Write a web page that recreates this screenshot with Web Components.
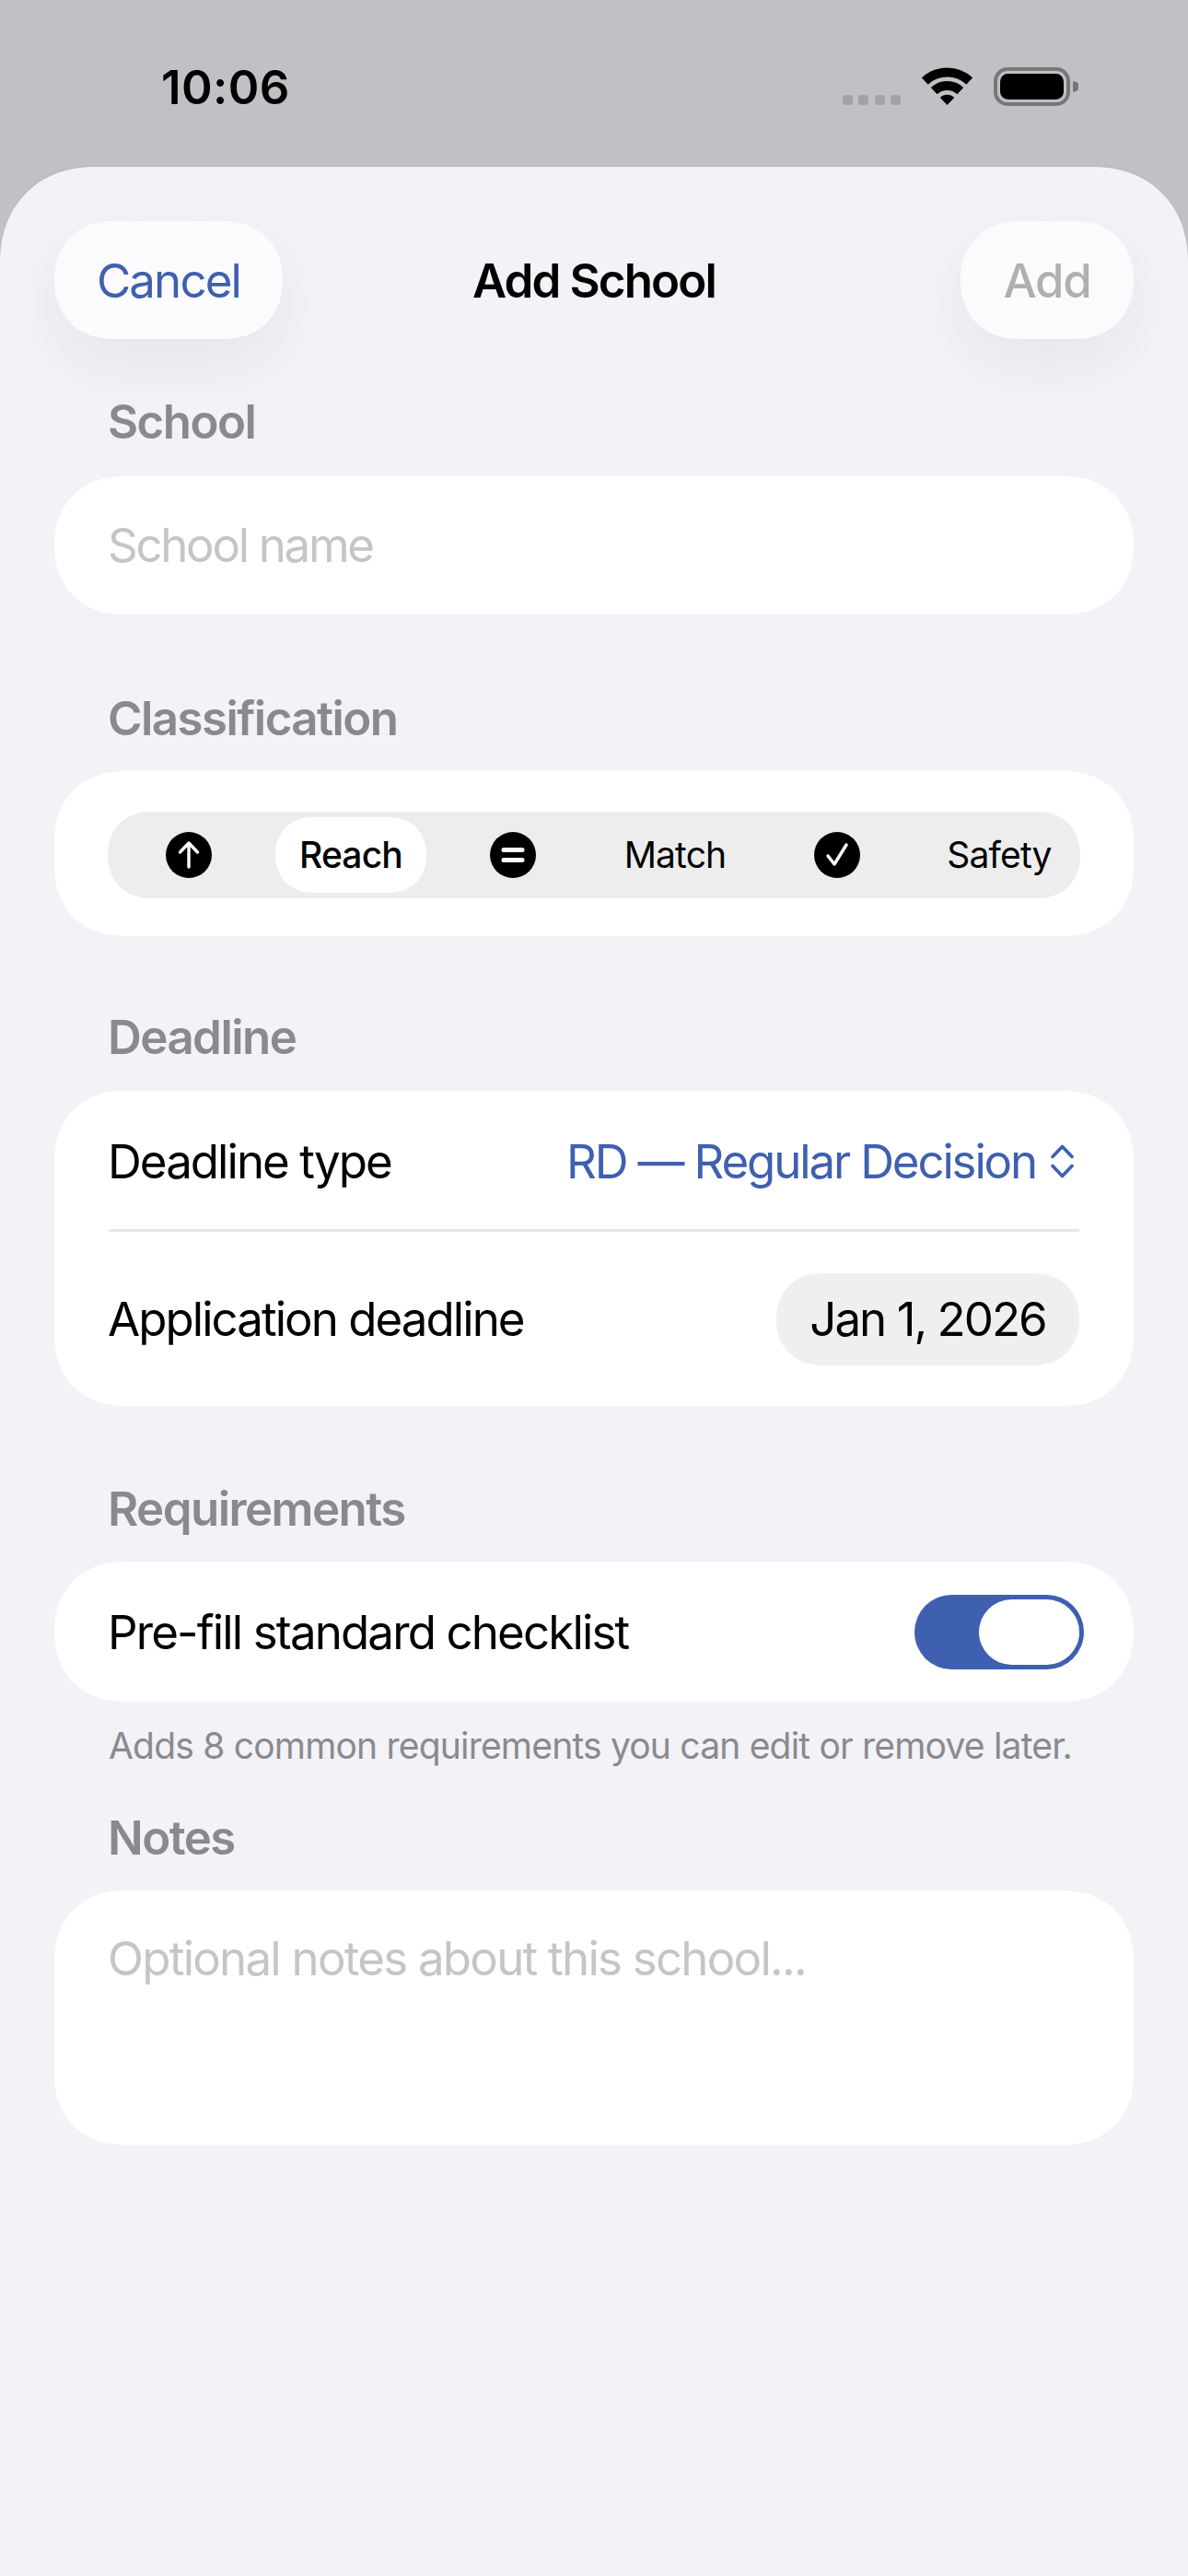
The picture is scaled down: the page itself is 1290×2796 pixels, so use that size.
<!DOCTYPE html>
<html lang="en"><head><meta charset="utf-8"><title>Add School</title>
<style>
html,body{margin:0;padding:0;background:#c1c0c5}
body{font-family:Inter,"Noto Sans",sans-serif;color:#000;-webkit-font-smoothing:antialiased}
</style></head><body>
<phone-screen>
  <status-bar slot="status" time="10:06"></status-bar>
  <sheet-header title="Add School" cancel="Cancel" confirm="Add"></sheet-header>

  <form-section label="School" style="--label-gap:29px;margin-top:60px">
    <form-card><text-field style="--ls:-2.3px" placeholder="School name"></text-field></form-card>
  </form-section>

  <form-section label="Classification" style="--label-gap:27px;margin-top:83px">
    <form-card style="--pad:44px 58px 41px"><segment-control></segment-control></form-card>
  </form-section>

  <form-section label="Deadline" style="--label-gap:28px;margin-top:80px">
    <form-card>
      <form-row style="--h:150px;--nudge:3px" label="Deadline type"><picker-value>RD — Regular Decision</picker-value></form-row>
      <form-divider></form-divider>
      <form-row style="--h:189px" label="Application deadline"><date-chip>Jan 1, 2026</date-chip></form-row>
    </form-card>
  </form-section>

  <form-section label="Requirements" style="--label-gap:27px;margin-top:82px" footer="Adds 8 common requirements you can edit or remove later.">
    <form-card><form-row style="--h:152px;--ls:-1.85px;--nudge:2px" label="Pre-fill standard checklist"><toggle-switch></toggle-switch></form-row></form-card>
  </form-section>

  <form-section label="Notes" style="--label-gap:27px;margin-top:46px">
    <form-card><text-field style="--ls:-1.75px" multiline placeholder="Optional notes about this school..."></text-field></form-card>
  </form-section>
</phone-screen>

<script>
function define(name, css, html, extra){
  customElements.define(name, class extends HTMLElement{
    connectedCallback(){
      if(this.shadowRoot) return;
      const root=this.attachShadow({mode:'open'});
      const h = typeof html==='function' ? html(this) : html;
      root.innerHTML='<style>'+css+'</style>'+h;
      if(extra) extra(this,root);
    }
  });
}
const BODY='font:400 51px/60px Inter,"Noto Sans",sans-serif;letter-spacing:var(--ls,-1.95px);';
const SQ='corner-shape:superellipse(1.12);';

define('phone-screen',
 ':host{display:flex;flex-direction:column;width:1290px;height:2796px;background:#c1c0c5;overflow:hidden}'+
 '.sheet{flex:1;background:#f2f2f7;border-radius:104px 104px 0 0;'+SQ+'box-shadow:0 -1px 1px rgba(0,0,0,.06);display:flex;flex-direction:column;padding:59px 59px 0}',
 '<slot name="status"></slot><div class="sheet"><slot></slot></div>');

define('status-bar',
 ':host{display:flex;height:181px;box-sizing:border-box;flex:none;justify-content:space-between;padding:0 119px 0 175px}'+
 '.time{font:600 51px/60px Inter,sans-serif;letter-spacing:.4px;margin-top:65px;color:#000}'+
 '.icons{display:flex;align-items:flex-start;margin-top:73px}'+
 '.dots{display:flex;gap:6.5px;margin:30px 23px 0 0}.dots i{display:block;width:11px;height:11px;border-radius:3.5px;background:#a3a3a7}'+
 '.wifi{display:block;margin-right:23px}.bat{display:block}',
 el=>`<div class="time">${el.getAttribute('time')}</div><div class="icons">
 <div class="dots"><i></i><i></i><i></i><i></i></div>
 <svg class="wifi" width="55" height="41" viewBox="0 0 55 41"><g fill="none" stroke="#000" stroke-width="10"><path d="M3.3 15.04A35.5 35.5 0 0 1 51.7 15.04"/><path d="M13.2 25.65A21 21 0 0 1 41.8 25.65"/></g><path d="M27.5 41L19.8 33A11 11 0 0 1 35.2 33Z" fill="#000"/></svg>
 <svg class="bat" width="92" height="42" viewBox="0 0 92 42"><rect x="2" y="2" width="79" height="38" rx="13" fill="none" stroke="#77777b" stroke-width="4"/><rect x="7" y="7" width="69" height="28" rx="8.5" fill="#000"/><path d="M86 15a7 6 0 0 1 0 12Z" fill="#77777b"/></svg>
 </div>`);

define('nav-pill',
 ':host{display:flex;align-items:center;justify-content:center;box-sizing:border-box;padding-top:2px;height:128px;width:var(--w);border-radius:64px;'+SQ+'background:#fbfbfe;box-shadow:0 26px 70px rgba(0,0,0,.055);font:var(--wt,400) 51px/60px Inter,sans-serif;letter-spacing:var(--ls,-1.85px);color:var(--c,#3f60b0)}',
 '<slot></slot>');

define('sheet-header',
 ':host{display:grid;grid-template-columns:1fr auto 1fr;align-items:center;flex:none}'+
 '.t{font:600 51px/60px Inter,sans-serif;letter-spacing:-1.85px;color:#000;padding-top:2px}'+
 '.l{justify-self:start}.r{justify-self:end}',
 el=>`<nav-pill class="l" style="--w:248px">${el.getAttribute('cancel')}</nav-pill><div class="t">${el.getAttribute('title')}</div><nav-pill class="r" style="--c:#b0b0b3;--w:188px;--wt:500;--ls:-1.3px">${el.getAttribute('confirm')}</nav-pill>`);

define('form-section',
 ':host{display:block;flex:none}'+
 '.lab{font:600 51px/60px Inter,sans-serif;letter-spacing:-1.55px;color:#8a8a8e;padding-left:58px;margin-bottom:var(--label-gap,27px)}'+
 '.foot{font:400 39px/48px Inter,sans-serif;letter-spacing:-.8px;color:#8a8a8e;padding-left:59px;margin-top:24px}',
 el=>`<div class="lab">${el.getAttribute('label')}</div><slot></slot>${el.hasAttribute('footer')?`<div class="foot">${el.getAttribute('footer')}</div>`:''}`);

define('form-card',
 ':host{display:block;background:#fff;border-radius:76px;'+SQ+'padding:var(--pad,0 59px 0 59px);box-sizing:border-box}',
 '<slot></slot>');

define('text-field',
 ':host{display:flex;align-items:center;height:150px;'+BODY+'color:#c5c5c7}'+
 'span{margin-left:-1px}'+
 ':host([multiline]){height:276px;align-items:flex-start;padding-top:44px;box-sizing:border-box}',
 el=>`<span>${el.getAttribute('placeholder')}</span>`);

define('form-row',
 ':host{display:flex;align-items:center;justify-content:space-between;height:var(--h,150px);'+BODY+'color:#000}'+
 'span{margin-left:-1px;padding-top:var(--nudge,0)}',
 el=>`<span>${el.getAttribute('label')}</span><slot></slot>`);

define('form-divider',':host{display:block;height:3px;background:#e7e7e9}','');

define('picker-value',
 ':host{display:flex;align-items:center;gap:16px;color:#3f60b0;padding:var(--nudge,0) 6px 0 0;letter-spacing:-2.15px}'+
 'svg{display:block}',
 '<span><slot></slot></span><svg width="25" height="37" viewBox="0 0 25 37" fill="none" stroke="#3f60b0" stroke-width="3.6" stroke-linecap="round" stroke-linejoin="round"><path d="M2 13.5L12.5 2.5L23 13.5"/><path d="M2 23.5L12.5 34.5L23 23.5"/></svg>');

define('date-chip',
 ':host{display:flex;align-items:center;justify-content:center;height:100px;width:329px;border-radius:50px;'+SQ+'background:#efeff0;color:#000}',
 '<slot></slot>');

define('toggle-switch',
 ':host{display:flex;justify-content:flex-end;align-items:center;box-sizing:border-box;width:184px;height:81px;border-radius:41px;background:#3f60b0;padding:0 5px;margin-right:-5px}'+
 'i{display:block;width:109px;height:71px;border-radius:36px;background:#fff}',
 '<i></i>');

define('segment-icon',
 ':host{display:flex;align-items:center;justify-content:center}svg{display:block}',
 el=>{
  const k=el.getAttribute('kind');
  const g={up:'<path d="M25 38V13M15.5 22L25 12L34.5 22"/>',
           eq:'<path d="M15 19.5H35" stroke-width="5"/><path d="M15 30.5H35" stroke-width="5"/>',
           ok:'<path d="M15 26L22 35L35 14"/>'}[k];
  return `<svg width="50" height="50" viewBox="0 0 50 50"><circle cx="25" cy="25" r="25" fill="#000"/><g fill="none" stroke="#fff" stroke-width="3.4" stroke-linecap="round" stroke-linejoin="round">${g}</g></svg>`;
 });

define('segment-label',
 ':host{display:flex;align-items:center;justify-content:center;margin:6px;border-radius:41px;'+SQ+'font:400 39px/48px Inter,sans-serif;letter-spacing:-.85px;color:#000}'+
 ':host([selected]){background:#fff;font-weight:500}',
 '<slot></slot>');

define('segment-control',
 ':host{display:grid;grid-template-columns:repeat(6,1fr);height:94px;border-radius:47px;'+SQ+'background:#ededee}',
 '<segment-icon kind="up"></segment-icon><segment-label selected>Reach</segment-label><segment-icon kind="eq"></segment-icon><segment-label>Match</segment-label><segment-icon kind="ok"></segment-icon><segment-label>Safety</segment-label>');
</script>
</body></html>
